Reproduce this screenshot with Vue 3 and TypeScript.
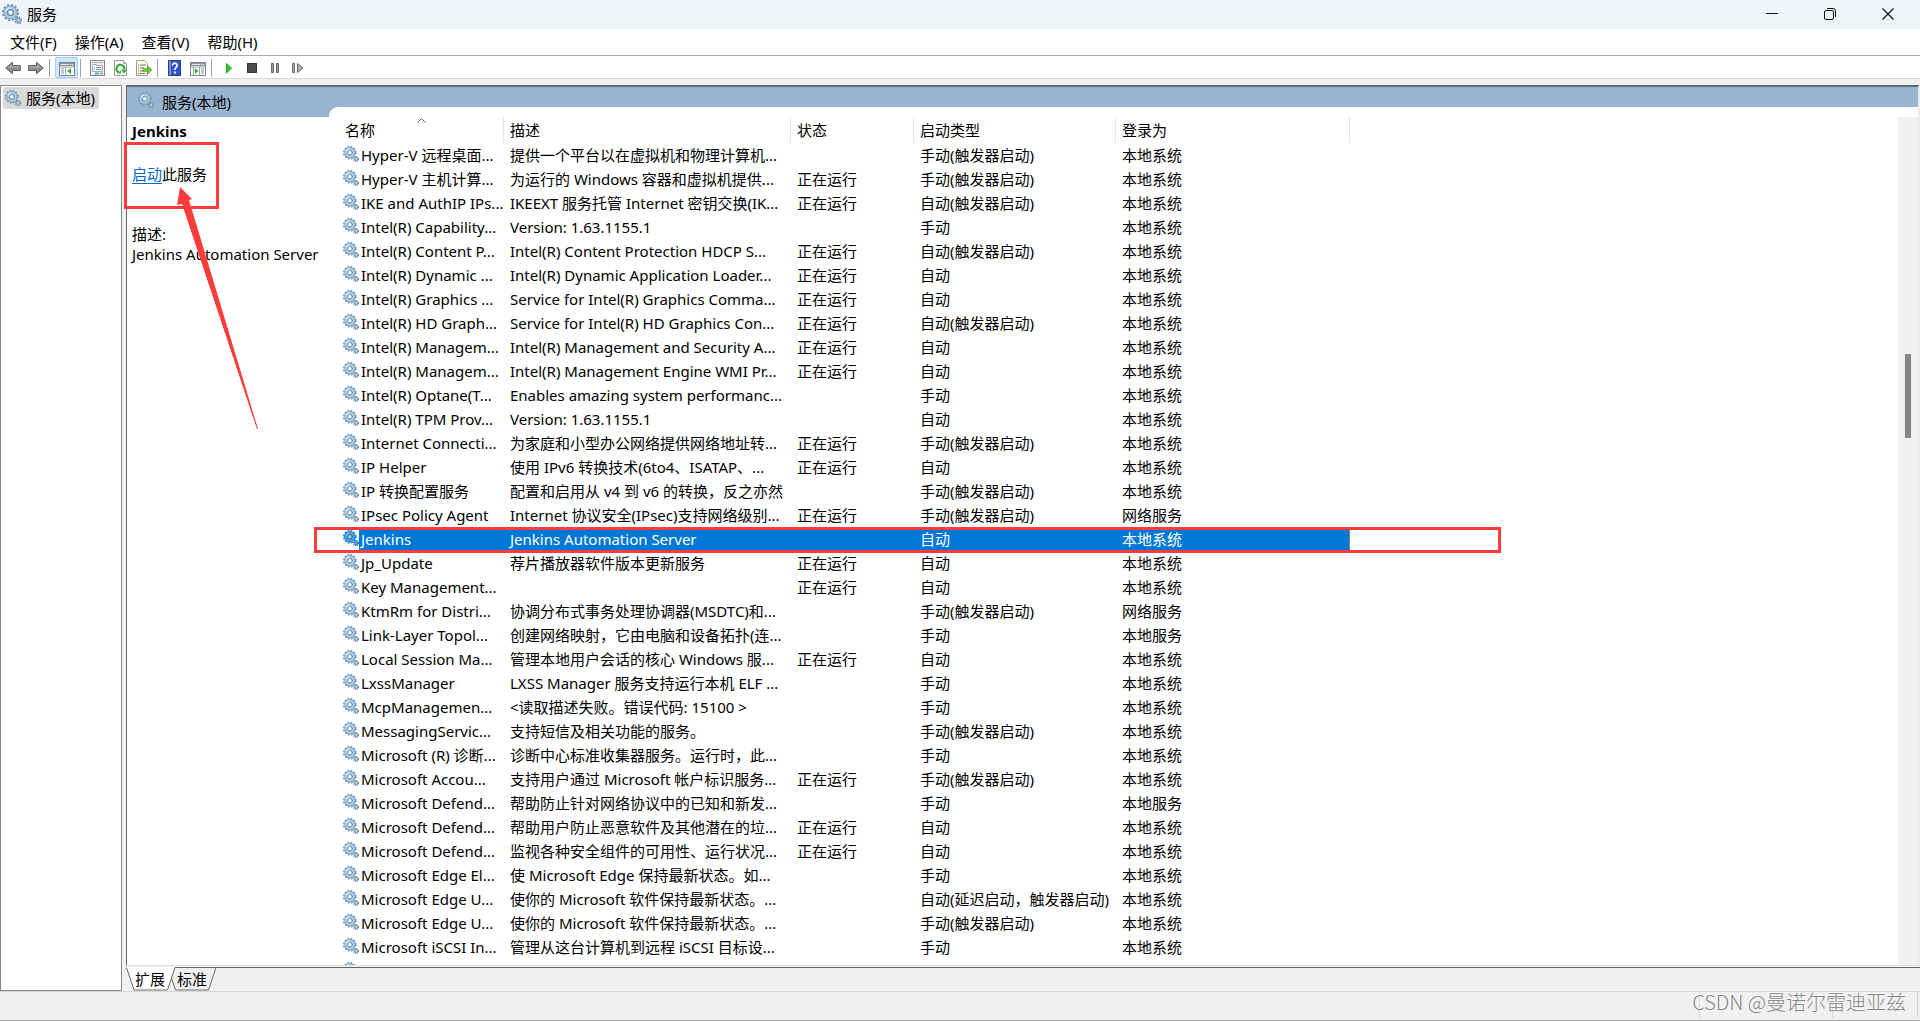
<script setup lang="ts">
interface Service {
  name: string
  desc: string
  running: boolean
  start: string
  logon: string
}

const MANUAL = '手动'
const AUTO = '自动'
const MANUAL_TRIGGER = '手动(触发器启动)'
const AUTO_TRIGGER = '自动(触发器启动)'
const SYSTEM = '本地系统'
const LOCAL = '本地服务'
const NETWORK = '网络服务'

const svc = (name: string, desc: string, running: boolean, start: string, logon: string = SYSTEM): Service => ({
  name,
  desc,
  running,
  start,
  logon,
})

const selected = 'Jenkins'
const menus: string[] = ['文件(F)', '操作(A)', '查看(V)', '帮助(H)']

const services: Service[] = [
  svc('Hyper-V 远程桌面...', '提供一个平台以在虚拟机和物理计算机...', false, MANUAL_TRIGGER),
  svc('Hyper-V 主机计算...', '为运行的 Windows 容器和虚拟机提供...', true, MANUAL_TRIGGER),
  svc('IKE and AuthIP IPs...', 'IKEEXT 服务托管 Internet 密钥交换(IK...', true, AUTO_TRIGGER),
  svc('Intel(R) Capability...', 'Version: 1.63.1155.1', false, MANUAL),
  svc('Intel(R) Content P...', 'Intel(R) Content Protection HDCP S...', true, AUTO_TRIGGER),
  svc('Intel(R) Dynamic ...', 'Intel(R) Dynamic Application Loader...', true, AUTO),
  svc('Intel(R) Graphics ...', 'Service for Intel(R) Graphics Comma...', true, AUTO),
  svc('Intel(R) HD Graph...', 'Service for Intel(R) HD Graphics Con...', true, AUTO_TRIGGER),
  svc('Intel(R) Managem...', 'Intel(R) Management and Security A...', true, AUTO),
  svc('Intel(R) Managem...', 'Intel(R) Management Engine WMI Pr...', true, AUTO),
  svc('Intel(R) Optane(T...', 'Enables amazing system performanc...', false, MANUAL),
  svc('Intel(R) TPM Prov...', 'Version: 1.63.1155.1', false, AUTO),
  svc('Internet Connecti...', '为家庭和小型办公网络提供网络地址转...', true, MANUAL_TRIGGER),
  svc('IP Helper', '使用 IPv6 转换技术(6to4、ISATAP、...', true, AUTO),
  svc('IP 转换配置服务', '配置和启用从 v4 到 v6 的转换，反之亦然', false, MANUAL_TRIGGER),
  svc('IPsec Policy Agent', 'Internet 协议安全(IPsec)支持网络级别...', true, MANUAL_TRIGGER, NETWORK),
  svc('Jenkins', 'Jenkins Automation Server', false, AUTO),
  svc('Jp_Update', '荐片播放器软件版本更新服务', true, AUTO),
  svc('Key Management...', '', true, AUTO),
  svc('KtmRm for Distri...', '协调分布式事务处理协调器(MSDTC)和...', false, MANUAL_TRIGGER, NETWORK),
  svc('Link-Layer Topol...', '创建网络映射，它由电脑和设备拓扑(连...', false, MANUAL, LOCAL),
  svc('Local Session Ma...', '管理本地用户会话的核心 Windows 服...', true, AUTO),
  svc('LxssManager', 'LXSS Manager 服务支持运行本机 ELF ...', false, MANUAL),
  svc('McpManagemen...', '<读取描述失败。错误代码: 15100 >', false, MANUAL),
  svc('MessagingServic...', '支持短信及相关功能的服务。', false, MANUAL_TRIGGER),
  svc('Microsoft (R) 诊断...', '诊断中心标准收集器服务。运行时，此...', false, MANUAL),
  svc('Microsoft Accou...', '支持用户通过 Microsoft 帐户标识服务...', true, MANUAL_TRIGGER),
  svc('Microsoft Defend...', '帮助防止针对网络协议中的已知和新发...', false, MANUAL, LOCAL),
  svc('Microsoft Defend...', '帮助用户防止恶意软件及其他潜在的垃...', true, AUTO),
  svc('Microsoft Defend...', '监视各种安全组件的可用性、运行状况...', true, AUTO),
  svc('Microsoft Edge El...', '使 Microsoft Edge 保持最新状态。如...', false, MANUAL),
  svc('Microsoft Edge U...', '使你的 Microsoft 软件保持最新状态。...', false, '自动(延迟启动，触发器启动)'),
  svc('Microsoft Edge U...', '使你的 Microsoft 软件保持最新状态。...', false, MANUAL_TRIGGER),
  svc('Microsoft iSCSI In...', '管理从这台计算机到远程 iSCSI 目标设...', false, MANUAL),
  svc('', '', false, '', ''),
]
</script>

<template>
  <div class="window">
    <svg class="defs" aria-hidden="true">
      <symbol id="gears" viewBox="0 0 16 16">
        <circle cx="6.8" cy="6.8" r="5.9" fill="none" stroke="#6f91ab" stroke-width="1.8" stroke-dasharray="1.85 1.24" />
        <circle cx="6.8" cy="6.8" r="3.9" fill="none" stroke="#a6cbe4" stroke-width="3.2" />
        <circle cx="6.8" cy="6.8" r="5.2" fill="none" stroke="#7fa4c0" stroke-width=".8" />
        <circle cx="6.8" cy="6.8" r="2.3" fill="#fff" stroke="#5f829e" stroke-width="1" />
        <path d="M3.200 5.600a3.900 3.900 0 0 1 3-2.700" fill="none" stroke="#e2f1fa" stroke-width="1.200" />
        <circle cx="13.200" cy="13.100" r="2.500" fill="none" stroke="#67859d" stroke-width="1.400" stroke-dasharray="1.150 .81" />
        <circle cx="13.200" cy="13.100" r="1.400" fill="#e6f1f8" stroke="#86a8c1" stroke-width="1.300" />
      </symbol>
    </svg>

    <header class="titlebar">
      <svg class="app-icon"><use href="#gears" /></svg>
      <span class="title">服务</span>
      <button class="caption" aria-label="最小化">
        <svg width="12" height="12"><path d="M0 5.500h12" stroke="#111" /></svg>
      </button>
      <button class="caption" aria-label="还原">
        <svg width="12" height="12" fill="none" stroke="#111">
          <rect x=".5" y="2.500" width="9" height="9" rx="1.500" />
          <path d="M3 .5h6a2.500 2.500 0 0 1 2.500 2.500v6" />
        </svg>
      </button>
      <button class="caption" aria-label="关闭">
        <svg width="12" height="12"><path d="M.5.5l11 11M11.500.5l-11 11" stroke="#111" stroke-width="1.2" /></svg>
      </button>
    </header>

    <nav class="menubar">
      <button v-for="m in menus" :key="m">{{ m }}</button>
    </nav>

    <div class="toolbar">
      <button aria-label="后退">
        <svg viewBox="0 0 16 16"><path d="M.7 8l6.800-5.800v3.300h7.800v5H7.500v3.300z" fill="#8d8d8d" stroke="#5e5e5e" /><path d="M3 7.500l3.500-3v2h7.800v1z" fill="#b5b5b5" /></svg>
      </button>
      <button aria-label="前进">
        <svg viewBox="0 0 16 16"><path d="M15.300 8L8.500 2.200v3.300H.7v5h7.800v3.300z" fill="#8d8d8d" stroke="#5e5e5e" /><path d="M13 7.500l-3.500-3v2H1.700v1z" fill="#b5b5b5" /></svg>
      </button>
      <i class="sep"></i>
      <button class="on" aria-label="显示/隐藏控制台树">
        <svg viewBox="0 0 16 16">
          <rect x=".5" y="2.500" width="15" height="13" fill="#fff" stroke="#7b8490" />
          <path d="M1 3h14v3H1z" fill="#8b939e" /><path d="M2 4.500h8" stroke="#dfe4ea" /><path d="M11 4.500h1m1 0h1" stroke="#fff" />
          <path d="M6.500 7v8.500M1 7h14" stroke="#9aa3ad" /><path d="M2 9h3M2 11h3M2 13h3" stroke="#8a94a0" />
          <path d="M12 8v6l-4-3z" fill="#32b52d" />
        </svg>
      </button>
      <i class="sep"></i>
      <button aria-label="属性">
        <svg viewBox="0 0 16 16">
          <rect x=".5" y=".5" width="14" height="15" fill="#f4f4f4" stroke="#858585" />
          <path d="M2 2.500h11" stroke="#a9a9a9" /><path d="M2.500 4.500h4v1h6v6h-10z" fill="#fff" stroke="#9badbf" />
          <path d="M4 7.500h1m1 0h5M4 9.500h1m1 0h5" stroke="#7388a0" /><path d="M5 13.500h4" stroke="#39b4e8" stroke-width="2" /><path d="M10 13.500h3" stroke="#aaa" stroke-width="2" />
        </svg>
      </button>
      <button aria-label="刷新">
        <svg viewBox="0 0 16 16">
          <path d="M1.500.5h9l3 3v12h-12z" fill="#f8f8f8" stroke="#999" /><path d="M10.500.5v3h3" fill="#ddd" stroke="#aaa" />
          <path d="M11.500 9a4 4 0 1 0-6 3.300" fill="none" stroke="#2eae2e" stroke-width="2" /><path d="M8 9.500h6l-3 4z" fill="#2eae2e" /><path d="M4 13.500h4v-3z" fill="#2eae2e" />
        </svg>
      </button>
      <button aria-label="导出列表">
        <svg viewBox="0 0 16 16">
          <path d="M.5.5h8l3 3v12H.5z" fill="#fdf9e2" stroke="#a39c84" />
          <path d="M2 5h1m1 0h6M2 8h1m1 0h4M2 11h1m1 0h4M2 13.500h1m1 0h5" stroke="#77736a" />
          <path d="M7 8.500h4.500v-3l4.500 4.500-4.500 4.500v-3H7z" fill="#69c83e" stroke="#3d9c25" stroke-width=".5" />
        </svg>
      </button>
      <i class="sep"></i>
      <button aria-label="帮助">
        <svg viewBox="0 0 16 16">
          <rect x="1.500" y=".5" width="12" height="15" fill="#3554c4" stroke="#2b3d93" /><path d="M2 1h2v14H2z" fill="#7a90df" />
          <path d="M5.500 5.500a2.300 2.300 0 1 1 3.600 1.900C8.300 8 8 8.600 8 10M8 11.500v2" fill="none" stroke="#fff" stroke-width="1.700" />
        </svg>
      </button>
      <button aria-label="显示/隐藏操作窗格">
        <svg viewBox="0 0 16 16">
          <rect x=".5" y="2.500" width="15" height="13" fill="#fff" stroke="#7b8490" />
          <path d="M1 3h14v3H1z" fill="#8b939e" /><path d="M2 4.500h8" stroke="#dfe4ea" /><path d="M11 4.500h1m1 0h1" stroke="#fff" />
          <path d="M9.500 7v8.500M3.500 7v8.500M1 7h14" stroke="#9aa3ad" /><path d="M11 9h3M11 11h3M11 13h3" stroke="#8a94a0" />
          <path d="M5 8v6l3.500-3z" fill="#32b52d" />
        </svg>
      </button>
      <i class="sep"></i>
      <button aria-label="启动服务">
        <svg viewBox="0 0 16 16"><path d="M5.500 3.500v9.500l5-4.800z" fill="#35c935" stroke="#17a317" /></svg>
      </button>
      <button aria-label="停止服务">
        <svg viewBox="0 0 16 16"><rect x="3.500" y="3.500" width="9" height="9" fill="#4b4b4b" stroke="#333" /></svg>
      </button>
      <button aria-label="暂停服务">
        <svg viewBox="0 0 16 16" fill="#999" stroke="#666"><path d="M4.500 3.500h2v9h-2zM9.500 3.500h2v9h-2z" /></svg>
      </button>
      <button aria-label="重新启动服务">
        <svg viewBox="0 0 16 16" fill="#b5b5b5" stroke="#666"><path d="M2.500 3.500h2v9h-2zM7.500 3.500v9l5.500-4.500z" /></svg>
      </button>
    </div>

    <main class="workspace">
      <aside class="tree">
        <button class="node">
          <svg class="icon"><use href="#gears" /></svg>
          <span>服务(本地)</span>
        </button>
      </aside>

      <div class="right">
        <section class="pane">
          <div class="band">
            <svg class="icon"><use href="#gears" /></svg>
            <span>服务(本地)</span>
          </div>
          <div class="content">
            <div class="detail">
              <h1>Jenkins</h1>
              <p class="action"><a href="#start">启动</a>此服务</p>
              <p>描述:</p>
              <p>Jenkins Automation Server</p>
            </div>
            <div class="list">
              <div class="viewport">
                <table>
                  <colgroup>
                    <col class="c-name" /><col class="c-desc" /><col class="c-state" /><col class="c-start" /><col class="c-logon" />
                  </colgroup>
                  <thead>
                    <tr>
                      <th>
                        名称
                        <svg class="sort" width="9" height="5"><path d="M.5 4.500l4-4 4 4" fill="none" stroke="#666" /></svg>
                      </th>
                      <th>描述</th>
                      <th>状态</th>
                      <th>启动类型</th>
                      <th>登录为</th>
                    </tr>
                  </thead>
                  <tbody>
                    <tr v-for="(s, i) in services" :key="i" :class="{ selected: s.name === selected }">
                      <td>
                        <div class="name">
                          <svg class="icon"><use href="#gears" /></svg>
                          <span>{{ s.name }}</span>
                        </div>
                      </td>
                      <td>{{ s.desc }}</td>
                      <td>{{ s.running ? '正在运行' : '' }}</td>
                      <td>{{ s.start }}</td>
                      <td>{{ s.logon }}</td>
                    </tr>
                  </tbody>
                </table>
              </div>
              <div class="scrollbar"><div class="thumb"></div></div>
            </div>
          </div>
        </section>

        <div class="tabs">
          <svg class="tab-shapes" width="92" height="24" fill="none">
            <path d="M45 10.500l4 12h33L90 .5H49z" fill="#f0f0f0" />
            <path d="M0 0l7.500 23h34L49 0z" fill="#fff" />
            <path d="M.5.5l7.500 22.500h33.500L49 .5h41L82.500 23h-33L45.500 11" stroke="#6a6a6a" />
          </svg>
          <button>扩展</button>
          <button>标准</button>
        </div>
      </div>
    </main>

    <footer class="status">
      <span class="watermark">CSDN @曼诺尔雷迪亚兹</span>
      <i></i><i></i><i></i>
    </footer>

    <div class="mark mark-action"></div>
    <div class="mark mark-row"></div>
    <svg class="arrow" width="84" height="244" aria-hidden="true">
      <path d="M4 0L16 12 13 13 82 242 81 242 6 17 1 18z" fill="#fc3b3a" />
    </svg>
  </div>
</template>

<style>
body {
  margin: 0;
}
</style>

<style scoped>
.window {
  position: relative;
  display: flex;
  flex-direction: column;
  height: 100vh;
  overflow: hidden;
  background: #f0f0f0;
  color: #000;
  font: 15px/20px "Noto Sans", "Noto Sans CJK SC", sans-serif;
  white-space: nowrap;
}
.window * {
  box-sizing: border-box;
}
.defs {
  position: absolute;
  width: 0;
  height: 0;
}
button {
  margin: 0;
  padding: 0;
  border: 0;
  background: none;
  color: inherit;
  font: inherit;
}
.icon {
  flex: none;
  width: 16px;
  height: 16px;
}
.titlebar {
  display: flex;
  flex: none;
  align-items: center;
  height: 29px;
  padding: 0 3px 2px 2px;
  background: #eff4f9;
}
.app-icon {
  width: 20px;
  height: 20px;
  margin-right: 5px;
}
.title {
  flex: 1;
}
.caption {
  display: flex;
  align-items: center;
  justify-content: center;
  width: 58px;
  height: 29px;
}
.menubar {
  display: flex;
  flex: none;
  gap: 18px;
  height: 27px;
  padding: 0 10px;
  border-bottom: 1px solid #a8a8a8;
  background: #fff;
}
.toolbar {
  display: flex;
  flex: none;
  align-items: center;
  height: 23px;
  padding: 1px 0 0 1px;
  border-bottom: 1px solid #d7d7d7;
  background: #fff;
}
.toolbar button {
  display: flex;
  align-items: center;
  justify-content: center;
  width: 23px;
  height: 21px;
}
.toolbar button svg {
  width: 16px;
  height: 16px;
}
.toolbar .on {
  border: 1px solid #99d1ff;
  border-radius: 2px;
  background: #cce8ff;
}
.sep {
  width: 8px;
  height: 18px;
  border-left: 2px solid #fff;
  background: linear-gradient(90deg, #a0a0a0 1px, #fff 1px);
  background-clip: padding-box;
  background-origin: padding-box;
}
.workspace {
  display: flex;
  flex: 1;
  gap: 4px;
  min-height: 0;
  padding-top: 6px;
}
.tree {
  width: 122px;
  padding: 1px 2px;
  border: 1px solid #828790;
  background: #fff;
}
.node {
  display: flex;
  align-items: center;
  gap: 5px;
  height: 22px;
  padding: 0 4px 0 2px;
  border-radius: 2px;
  background: #d9d9d9;
}
.right {
  display: flex;
  flex: 1;
  flex-direction: column;
  min-width: 0;
}
.pane {
  display: flex;
  flex: 1;
  flex-direction: column;
  min-height: 0;
  margin-right: 1px;
  border: 1px solid #e3e3e3;
  border-top: 2px solid #696969;
  border-left: 1px solid #696969;
  background: #fff;
}
.band {
  display: flex;
  flex: none;
  align-items: center;
  gap: 8px;
  height: 30px;
  padding-left: 11px;
  background: #99b4d1;
}
.band .icon {
  margin-bottom: 4px;
}
.content {
  display: flex;
  flex: 1;
  min-height: 0;
}
.detail {
  width: 202px;
  padding: 4px 5px;
}
.detail h1,
.detail p {
  margin: 0;
  font-size: 15px;
}
.detail .action {
  margin: 23px 0 40px;
}
.detail a {
  color: #0066cc;
  text-underline-offset: 3px;
}
.list {
  display: flex;
  flex: 1;
  min-width: 0;
  margin-top: -10px;
  padding-top: 10px;
  border-top-left-radius: 9px;
  background: #fff;
}
.viewport {
  flex: 1;
  overflow: hidden;
}
table {
  width: 1021px;
  border-collapse: separate;
  border-spacing: 0;
  table-layout: fixed;
}
.c-name {
  width: 175px;
}
.c-desc {
  width: 287px;
}
.c-state {
  width: 123px;
}
.c-start {
  width: 202px;
}
.c-logon {
  width: 234px;
}
th {
  position: relative;
  height: 26px;
  padding: 0 0 0 6px;
  border-right: 1px solid #e5e5e5;
  font-weight: 400;
  line-height: 26px;
  text-align: left;
}
th:first-child {
  padding-left: 16px;
}
.sort {
  position: absolute;
  top: 1px;
  left: 88px;
}
td {
  height: 24px;
  padding: 0 0 0 6px;
  line-height: 24px;
}
td:first-child {
  padding: 0;
}
.name {
  display: flex;
  align-items: center;
  height: 24px;
  padding-left: 14px;
}
.name .icon {
  margin-bottom: 2px;
}
.name span {
  flex: 1;
  height: 24px;
  padding-left: 2px;
}
.selected td:not(:first-child),
.selected .name span {
  background: #0078d7;
  color: #fff;
}
.selected td:last-child {
  border-right: 1px dotted #ff8728;
}
.selected .icon {
  filter: brightness(0.75) saturate(3.5);
}
.scrollbar {
  width: 20px;
  background: #f0f0f0;
}
.thumb {
  width: 6px;
  height: 84px;
  margin: 237px auto 0;
  background: #858585;
}
.tabs {
  position: relative;
  display: flex;
  flex: none;
  gap: 12px;
  height: 24px;
  margin-top: 1px;
  padding-left: 9px;
  background: linear-gradient(#696969, #696969) 49px 0 / 100% 1px no-repeat;
}
.tabs button {
  position: relative;
  height: 24px;
}
.tab-shapes {
  position: absolute;
  top: 0;
  left: 0;
}
.status {
  position: relative;
  display: flex;
  flex: none;
  justify-content: flex-end;
  height: 30px;
  padding-right: 2px;
  border-top: 1px solid #d7d7d7;
  border-bottom: 1px solid #aaa;
}
.status i {
  width: 133px;
  height: 26px;
  border-left: 1px solid #d7d7d7;
}
.status i:nth-of-type(2) {
  width: 85px;
}
.status i:last-child {
  width: 1px;
}
.watermark {
  position: absolute;
  right: 14px;
  top: -1px;
  color: #858585;
  font: 300 20px/22px "Noto Sans CJK SC", sans-serif;
  text-shadow: -1px -1px 0 #fff;
}
.mark {
  position: absolute;
  border: 3px solid #fc3b3a;
}
.mark-action {
  top: 142px;
  left: 124px;
  width: 95px;
  height: 67px;
}
.mark-row {
  top: 527px;
  left: 314px;
  width: 1187px;
  height: 26px;
}
.arrow {
  position: absolute;
  top: 187px;
  left: 176px;
}
</style>
